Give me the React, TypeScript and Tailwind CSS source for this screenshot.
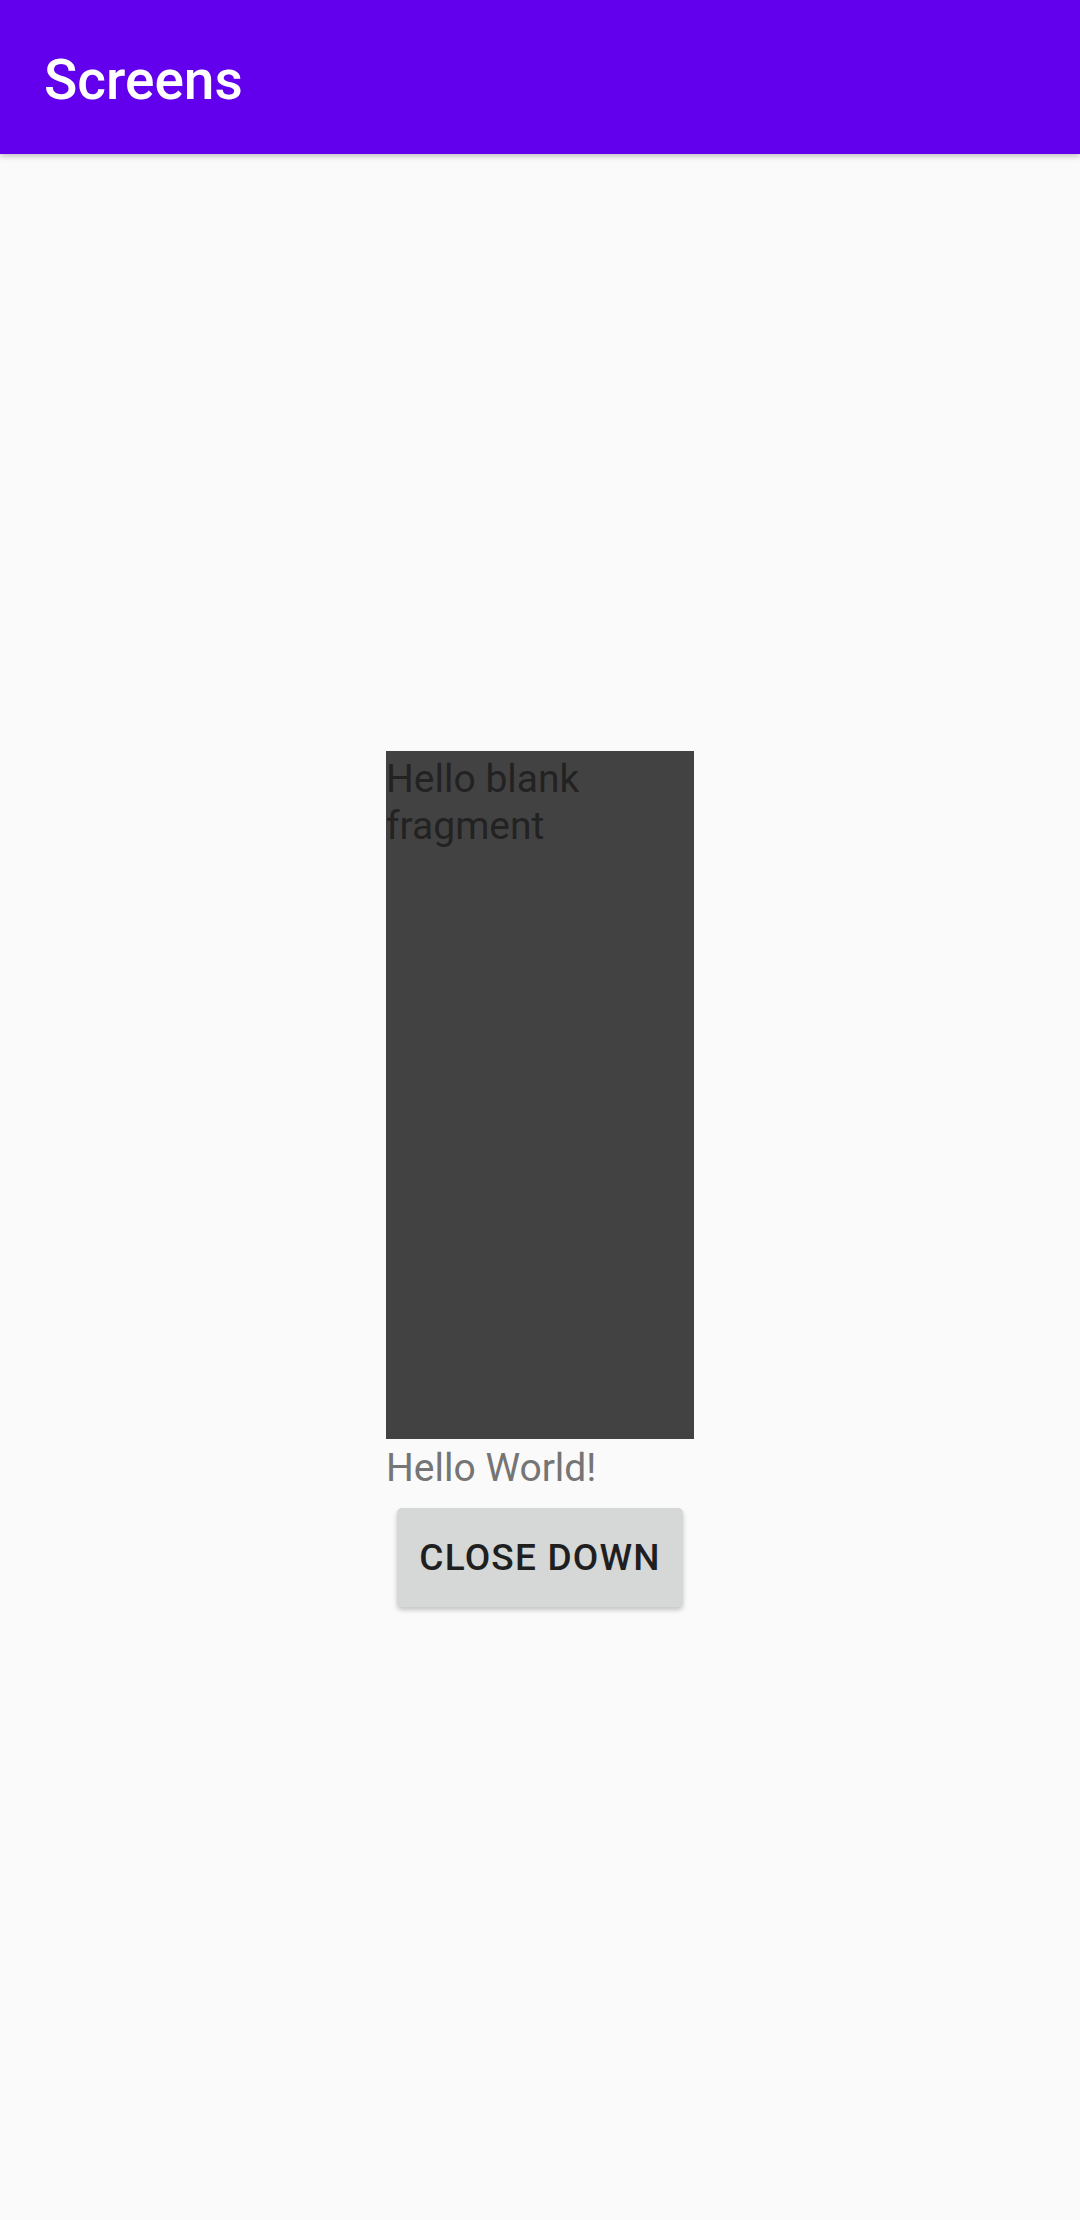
export default function App() {
  return (
    <div className="flex h-[2220px] w-[1080px] flex-col bg-[#fafafa] font-['Roboto',sans-serif]">
      <header className="relative z-10 flex h-[154px] shrink-0 items-center bg-[#6200ee] pl-[44px] pt-[6px] shadow-[0_2px_6px_rgba(0,0,0,0.25)]">
        <h1 className="text-[55px] font-medium leading-none text-white">Screens</h1>
      </header>
      <main className="flex flex-1 items-center justify-center">
        <div className="flex w-[308px] flex-col">
          <div className="h-[688px] bg-[#424242] pt-[5px] text-[39px] leading-[47px] text-[#222222]">
            Hello blank fragment
          </div>
          <p className="h-[49px] pt-[5px] text-[39px] leading-[49px] text-[#757575]">Hello World!</p>
          <button className="mx-auto mb-[16px] mt-[20px] h-[99px] w-[286px] rounded-[5px] bg-[#d6d7d7] text-[37px] font-medium tracking-[1.2px] text-[#1f1f1f] shadow-[0_3px_5px_rgba(0,0,0,0.22)]">
            CLOSE DOWN
          </button>
        </div>
      </main>
    </div>
  )
}
